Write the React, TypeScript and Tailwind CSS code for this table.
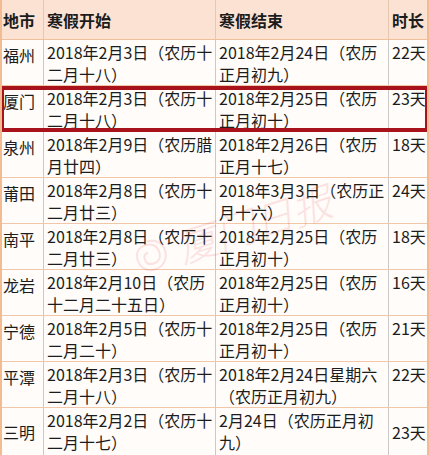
const rows: { city: string; start: string[]; end: string[]; days: string; center?: boolean; mark?: boolean }[] = [
  { city: '福州', start: ['2018年2月3日（农历十', '二月十八）'], end: ['2018年2月24日（农历', '正月初九）'], days: '22天' },
  { city: '厦门', start: ['2018年2月3日（农历十', '二月十八）'], end: ['2018年2月25日（农历', '正月初十）'], days: '23天', mark: true },
  { city: '泉州', start: ['2018年2月9日（农历腊', '月廿四）'], end: ['2018年2月26日（农历', '正月十七）'], days: '18天' },
  { city: '莆田', start: ['2018年2月8日（农历十', '二月廿三）'], end: ['2018年3月3日（农历正', '月十六）'], days: '24天' },
  { city: '南平', start: ['2018年2月8日（农历十', '二月廿三）'], end: ['2018年2月25日（农历', '正月初十）'], days: '18天' },
  { city: '龙岩', start: ['2018年2月10日（农历', '十二月二十五日）'], end: ['2018年2月25日（农历', '正月初十）'], days: '16天' },
  { city: '宁德', start: ['2018年2月5日（农历十', '二月二十）'], end: ['2018年2月25日（农历', '正月初十）'], days: '21天' },
  { city: '平潭', start: ['2018年2月3日（农历十', '二月十八）'], end: ['2018年2月24日星期六', '（农历正月初九）'], days: '22天' },
  { city: '三明', start: ['2018年2月2日（农历十', '二月十七）'], end: ['2月24日（农历正月初', '九）'], days: '23天', center: true },
];

const cols = 'grid grid-cols-[42px_172px_173px_42px]';

export default function App() {
  return (
    <div
      className="relative w-[429px] h-[455px] overflow-hidden bg-[#fffcfa] border-x-2 border-[#f2bb92] text-[16px] text-[#1c1c1c]"
      style={{ fontFamily: '"Noto Sans CJK SC", "Noto Sans", sans-serif' }}
    >
      <div className={`${cols} h-[40px] bg-[#fbe2d2] border-b border-[#f0bf9c] font-bold`}>
        <div className="flex items-center pl-[1px] border-r border-[#e6c7b0]">地市</div>
        <div className="flex items-center pl-[3px] border-r border-[#e6c7b0]">寒假开始</div>
        <div className="flex items-center pl-[3px] border-r border-[#e6c7b0]">寒假结束</div>
        <div className="flex items-center pl-[3px]">时长</div>
      </div>
      {rows.map((r, i) => (
        <div
          key={r.city}
          className={`${cols} relative ${i === rows.length - 1 ? 'h-[47px]' : 'h-[46px] border-b border-[#f0c8a9]'} leading-[22px]`}
        >
          <div className={`flex ${r.center ? 'items-center' : 'items-start pt-[4px]'} pl-[1px] border-r border-[#c9c9c9] whitespace-nowrap`}>
            {r.city}
          </div>
          <div className="flex flex-col pt-[1px] pl-[3px] border-r border-[#c9c9c9] whitespace-nowrap">
            {r.start.map((l) => (
              <span key={l}>{l}</span>
            ))}
          </div>
          <div className="flex flex-col pt-[1px] pl-[3px] border-r border-[#c9c9c9] whitespace-nowrap">
            {r.end.map((l) => (
              <span key={l}>{l}</span>
            ))}
          </div>
          <div className={`flex ${r.center ? 'items-center' : 'items-start pt-[1px]'} pl-[3px] whitespace-nowrap`}>
            {r.days}
          </div>
          {r.mark && (
            <div className="pointer-events-none absolute -left-[2px] -right-[2px] top-0 -bottom-[1px] border-[4px] border-[#a8121a]" />
          )}
        </div>
      ))}
      {/* watermark */}
      <div className="pointer-events-none absolute left-[125px] top-[200px] flex items-center gap-2 -rotate-[18deg] opacity-[0.13] text-[#e23b3b]">
        <svg width="40" height="40" viewBox="0 0 40 40" fill="none" stroke="currentColor" strokeWidth="2">
          <path d="M20 5c9 0 15 6 15 14s-6 15-15 15S6 28 6 20s5-12 12-12 11 5 11 11-4 9-9 9-7-3-7-7 3-5 5-5" />
        </svg>
        <span className="text-[40px] italic font-light" style={{ fontFamily: '"Noto Sans CJK SC", sans-serif' }}>
          厦门日报
        </span>
      </div>
    </div>
  );
}
